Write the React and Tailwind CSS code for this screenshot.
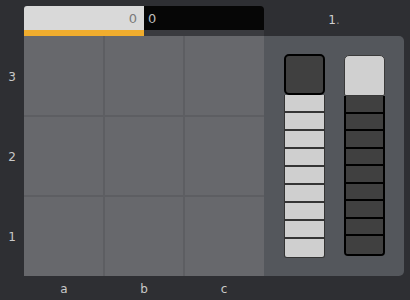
export default function App() {
  const font = { fontFamily: '"DejaVu Sans", sans-serif' };
  const segs = Array.from({ length: 9 });
  return (
    <div className="w-[410px] h-[300px] bg-[#2e2f33] flex flex-col text-[#c9c9c9] text-[12px] leading-none" style={font}>
      {/* top bar */}
      <div className="flex pt-[6px] pl-[24px] h-[36px]">
        <div className="flex flex-col w-[120px]">
          <div className="h-[24px] bg-[#d9d9d9] rounded-tl-[3px] flex items-center justify-end pr-[7px] text-[13px] text-[#7a7a7a]">0</div>
          <div className="h-[6px] bg-[#f0ad2e]" />
        </div>
        <div className="flex flex-col w-[120px]">
          <div className="h-[24px] bg-[#060606] rounded-tr-[4px] flex items-center pl-[4px] text-[13px] text-[#bdbdbd]">0</div>
          <div className="h-[6px] bg-[#3a3b3f]" />
        </div>
        <div className="w-[140px] flex items-center justify-center pb-[2px] text-[#d0d0d0]">
          1<span className="text-[#8a8a8a]">.</span>
        </div>
      </div>
      {/* main */}
      <div className="flex h-[240px]">
        <div className="w-[24px] flex flex-col">
          {["3", "2", "1"].map((n) => (
            <div key={n} className="h-[80px] flex items-center justify-center pt-[1px]">{n}</div>
          ))}
        </div>
        <div className="w-[240px] grid grid-cols-3 grid-rows-3 gap-[2px] bg-[#5d5e62]">
          {Array.from({ length: 9 }).map((_, i) => (
            <div key={i} className="bg-[#67686c]" />
          ))}
        </div>
        <div className="w-[140px] bg-[#54575c] rounded-r-[5px] flex justify-center items-center gap-[19px] pb-[1px]">
          {/* left column */}
          <div className="w-[41px] flex flex-col">
            <div className="h-[41px] bg-[#404040] border-2 border-black rounded-[5px]" />
            <div className="flex flex-col border-x-[1.5px] border-b-[1.5px] border-[#333] rounded-b-[3px] overflow-hidden">
              {segs.map((_, i) => (
                <div key={i} className={`h-[18px] bg-[#cfcfcf] ${i < 8 ? "border-b-2 border-[#353535]" : ""}`} />
              ))}
            </div>
          </div>
          {/* right column */}
          <div className="w-[41px] flex flex-col">
            <div className="h-[41px] bg-[#d0d0d0] border-[1.5px] border-[#3a3a3a] rounded-t-[5px] rounded-b-[2px]" />
            <div className="flex flex-col border-x-2 border-b-2 border-black rounded-b-[4px] overflow-hidden">
              {segs.map((_, i) => (
                <div key={i} className={`h-[17.5px] bg-[#404040] ${i < 8 ? "border-b-2 border-black" : ""}`} />
              ))}
            </div>
          </div>
        </div>
      </div>
      {/* bottom labels */}
      <div className="flex pl-[24px] h-[24px]">
        {["a", "b", "c"].map((l) => (
          <div key={l} className="w-[80px] flex items-center justify-center pt-[1px]">{l}</div>
        ))}
      </div>
    </div>
  );
}
